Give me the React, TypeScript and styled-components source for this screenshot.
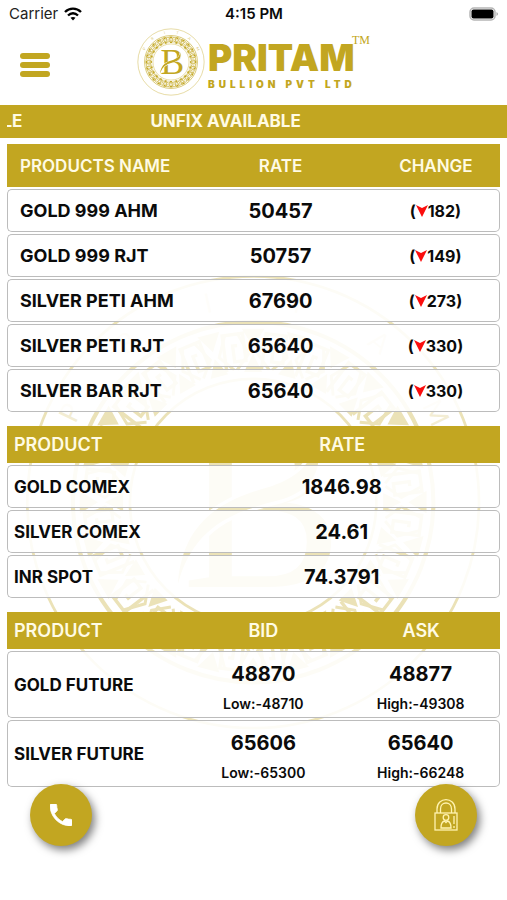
import React from "react";
import styled, { createGlobalStyle } from "styled-components";

const GOLD = "#c2a621";
const CREAM = "#fffbe4";

const GlobalStyle = createGlobalStyle`
  *, *::before, *::after { box-sizing: border-box; }
  body {
    margin: 0;
    background: #fff;
    color: #0b0b0b;
    font-family: Inter, "Liberation Sans", sans-serif;
  }
`;

const Screen = styled.div`
  display: flex;
  flex-direction: column;
  min-height: 100vh;
`;

const StatusBar = styled.div`
  display: grid;
  grid-template-columns: 1fr auto 1fr;
  align-items: center;
  height: 27px;
  padding: 0 8px 0 9px;
  font-size: 15px;
`;

const Carrier = styled.span`
  display: flex;
  align-items: center;
  gap: 6px;
  color: #222;
`;

const Clock = styled.span`
  font-size: 15px;
  font-weight: 600;
`;

const BatteryIcon = styled.svg`
  justify-self: end;
`;

const Header = styled.header`
  display: grid;
  grid-template-columns: 1fr auto 1fr;
  align-items: start;
  height: 78px;
  padding: 0 20px;
`;

const MenuButton = styled.button`
  display: flex;
  flex-direction: column;
  gap: 3px;
  width: 30px;
  margin-top: 26px;
  padding: 0;
  border: 0;
  background: none;
  cursor: pointer;
`;

const MenuBar = styled.span`
  height: 6px;
  border-radius: 3px;
  background: ${GOLD};
`;

const Content = styled.main`
  position: relative;
  isolation: isolate;
  flex: 1;
`;

const Watermark = styled.div`
  position: absolute;
  inset: 0;
  z-index: -1;
  display: grid;
  place-items: center;
  opacity: 0.32;

  svg {
    width: 90%;
    height: auto;
  }
`;

const Ticker = styled.div`
  height: 33px;
  padding: 0 7px;
  background: ${GOLD};
  color: ${CREAM};
  font-size: 17px;
  font-weight: 700;
  line-height: 33px;
`;

const TickerWindow = styled.div`
  overflow: hidden;
`;

const TickerTrack = styled.div<{ $offset: number }>`
  display: flex;
  gap: 128px;
  width: max-content;
  transform: translateX(${(p) => -p.$offset}px);
`;

const Board = styled.div`
  display: grid;
  gap: 10px;
  padding: 4px 7px 110px;
`;

const PriceTable = styled.table`
  width: 100%;
  table-layout: fixed;
  border-collapse: separate;
  border-spacing: 0 2px;
`;

const Column = styled.col<{ $width: number }>`
  width: ${(p) => p.$width}%;
`;

const HeadCell = styled.th<{ $tall?: boolean; $name?: boolean; $inset?: boolean }>`
  height: ${(p) => (p.$tall ? 43 : 37)}px;
  padding: 0 0 0 ${(p) => (p.$name ? (p.$inset ? 13 : 7) : 0)}px;
  background: ${GOLD};
  color: ${CREAM};
  font-size: ${(p) => (p.$tall ? 17 : 18)}px;
  font-weight: 600;
  text-align: ${(p) => (p.$name ? "left" : "center")};
`;

const Row = styled.tr<{ $tall?: boolean }>`
  & > * {
    height: ${(p) => (p.$tall ? 67 : 43)}px;
    border: 1px solid #bcbcbc;
    border-width: 1px 0;
    background: rgba(255, 255, 255, 0.88);
  }
  & > :first-child {
    border-left-width: 1px;
    border-radius: 5px 0 0 5px;
  }
  & > :last-child {
    border-right-width: 1px;
    border-radius: 0 5px 5px 0;
  }
`;

const NameCell = styled.th<{ $inset?: boolean }>`
  padding: 0 0 0 ${(p) => (p.$inset ? 12 : 6)}px;
  font-size: ${(p) => (p.$inset ? 18 : 17)}px;
  font-weight: 700;
  text-align: left;
  white-space: nowrap;
`;

const ValueCell = styled.td`
  padding: 0;
  font-size: 20px;
  font-weight: 700;
  text-align: center;
`;

const Change = styled.span`
  display: flex;
  align-items: center;
  justify-content: center;
  font-size: 16px;
`;

const Quote = styled.div`
  display: grid;
  gap: 10px;
  padding-top: 4px;
  line-height: 24px;
`;

const Extreme = styled.small`
  font-size: 14px;
  font-weight: 600;
  line-height: 16px;
`;

const FloatingButton = styled.button<{ $side: "left" | "right" }>`
  position: fixed;
  bottom: 54px;
  ${(p) => p.$side}: 30px;
  display: grid;
  place-items: center;
  width: 62px;
  height: 62px;
  padding: 0;
  border: 0;
  border-radius: 50%;
  background: ${GOLD};
  box-shadow: 3px 4px 9px rgba(0, 0, 0, 0.5);
  cursor: pointer;
`;

const SEGMENTS = Array.from({ length: 24 }, (_, i) => i * 15);

const Seal = ({ id }: { id: string }) => (
  <g fill="none" stroke={GOLD}>
    <circle r="99" strokeWidth="1.2" />
    <circle r="79" strokeWidth="1.8" />
    <circle r="54" strokeWidth="1.2" />
    {SEGMENTS.map((angle) => (
      <g key={angle} transform={`rotate(${angle})`}>
        <path d="M-5 -76 L5 -76 L0 -68 Z M-4 -57 L4 -57 L0 -65 Z" fill={GOLD} stroke="none" />
        <path d="M-7 -74 L-2 -65 L-7 -58 M7 -74 L2 -65 L7 -58" strokeWidth="1.3" />
        <path transform="rotate(7.5)" d="M-4 -58 V-74 H5 V-62 H0 V-69 H2" strokeWidth="1.5" />
      </g>
    ))}
    <path id={`${id}-arc`} d="M-80.4 -27.7 A85 85 0 0 1 80.4 -27.7" stroke="none" />
    {["P", "R", "I", "T", "A", "M"].map((letter, i) => (
      <text
        key={letter}
        fontFamily="Lato, sans-serif"
        fontSize="12"
        fill={GOLD}
        fillOpacity="0.6"
        stroke="none"
        textAnchor="middle"
      >
        <textPath href={`#${id}-arc`} startOffset={`${5 + i * 18}%`}>
          {letter}
        </textPath>
      </text>
    ))}
    <text
      x="4"
      y="37"
      fontFamily="'Liberation Serif', serif"
      fontSize="106"
      fill={GOLD}
      stroke="none"
      textAnchor="middle"
    >
      B
    </text>
    <path
      d="M-33 36 C-31 6 -10 -2 8 -7 C20 -11 27 -18 27 -28 C32 -14 25 -5 12 -1 C-8 4 -26 10 -33 36 Z"
      fill={GOLD}
      stroke="#fff"
      strokeWidth="3"
      paintOrder="stroke"
    />
  </g>
);

const Logo = () => (
  <svg width="234" height="70" viewBox="0 0 234 70" role="img" aria-label="Pritam Bullion Pvt Ltd">
    <g transform="translate(34 35) scale(0.335)">
      <Seal id="logo" />
    </g>
    <g fill={GOLD} fontFamily="Inter, sans-serif">
      <text x="71" y="44" fontSize="37" fontWeight="900">
        PRITAM
      </text>
      <text x="71" y="61" fontSize="10" fontWeight="900" letterSpacing="4">
        BULLION PVT LTD
      </text>
      <text x="215" y="17" fontSize="12" fontFamily="'Liberation Serif', serif">
        TM
      </text>
    </g>
  </svg>
);

const WifiIcon = () => (
  <svg width="18" height="14" viewBox="0 0 18 14" fill="none" stroke="#000" strokeWidth="2.3" aria-hidden="true">
    <path d="M1 5 C5.5 0.5 12.5 0.5 17 5" />
    <path d="M4 8.5 C7 5.5 11 5.5 14 8.5" />
    <path d="M6.5 10.8 C8 9.6 10 9.6 11.5 10.8 L9 13.5 Z" fill="#000" stroke="none" />
  </svg>
);

const DownArrow = () => (
  <svg width="12" height="12" viewBox="0 0 12 12" role="img" aria-label="down">
    <path d="M0 0 L6 3 L12 0 L6 12 Z" fill="#fb0d0d" />
  </svg>
);

const PhoneIcon = () => (
  <svg width="22" height="22" viewBox="3 3 18 18" fill="#fff" stroke="#fff" strokeWidth="0.6" aria-hidden="true">
    <path d="M6.62 10.79c1.44 2.83 3.76 5.14 6.59 6.59l2.2-2.2c.27-.27.67-.36 1.02-.24 1.12.37 2.33.57 3.57.57.55 0 1 .45 1 1V20c0 .55-.45 1-1 1-9.39 0-17-7.61-17-17 0-.55.45-1 1-1h3.5c.55 0 1 .45 1 1 0 1.25.2 2.45.57 3.57.11.35.03.74-.25 1.02l-2.2 2.2z" />
  </svg>
);

const LockIcon = () => (
  <svg width="26" height="34" viewBox="0 0 26 34" fill="none" stroke="#fff3b0" strokeWidth="1.3" aria-hidden="true">
    <path d="M4 15 V11 C4 -1.5 22 -1.5 22 11 V15 M7.5 15 V11 C7.5 3 18.5 3 18.5 11 V15" />
    <rect x="2" y="15" width="22" height="17" />
    <circle cx="13" cy="19.5" r="2.8" />
    <path d="M8 30 C8 26 9.5 23.5 11.5 23 L13 24.5 L14.5 23 C16.5 23.5 18 26 18 30 Z" />
    <path d="M21 18 V26 M21 28 V30" />
  </svg>
);

const PRODUCTS = [
  { name: "GOLD 999 AHM", rate: "50457", change: "182" },
  { name: "GOLD 999 RJT", rate: "50757", change: "149" },
  { name: "SILVER PETI AHM", rate: "67690", change: "273" },
  { name: "SILVER PETI RJT", rate: "65640", change: "330" },
  { name: "SILVER BAR RJT", rate: "65640", change: "330" },
];

const SPOT = [
  { name: "GOLD COMEX", rate: "1846.98" },
  { name: "SILVER COMEX", rate: "24.61" },
  { name: "INR SPOT", rate: "74.3791" },
];

const FUTURES = [
  { name: "GOLD FUTURE", bid: "48870", low: "48710", ask: "48877", high: "49308" },
  { name: "SILVER FUTURE", bid: "65606", low: "65300", ask: "65640", high: "66248" },
];

const Columns = ({ widths }: { widths: number[] }) => (
  <colgroup>
    {widths.map((width, i) => (
      <Column key={i} $width={width} />
    ))}
  </colgroup>
);

export default function App() {
  return (
    <Screen>
      <GlobalStyle />
      <StatusBar>
        <Carrier>
          Carrier
          <WifiIcon />
        </Carrier>
        <Clock>4:15 PM</Clock>
        <BatteryIcon width="30" height="14" viewBox="0 0 30 14" aria-hidden="true">
          <rect x="1" y="1" width="25" height="12" rx="4" fill="#fff" stroke="#b5b5b5" strokeWidth="1.5" />
          <rect x="2.5" y="2.5" width="22" height="9" rx="2" fill="#000" />
          <path d="M27.5 5 C29.5 6 29.5 8 27.5 9 Z" fill="#aaa" />
        </BatteryIcon>
      </StatusBar>
      <Header>
        <MenuButton type="button" aria-label="Menu">
          <MenuBar />
          <MenuBar />
          <MenuBar />
        </MenuButton>
        <Logo />
      </Header>
      <Content>
        <Watermark aria-hidden="true">
          <svg viewBox="-100 -100 200 200">
            <Seal id="watermark" />
          </svg>
        </Watermark>
        <Ticker>
          <TickerWindow>
            <TickerTrack $offset={135}>
              <span>UNFIX AVAILABLE</span>
              <span>UNFIX AVAILABLE</span>
            </TickerTrack>
          </TickerWindow>
        </Ticker>
        <Board>
          <PriceTable>
            <Columns widths={[37, 37, 26]} />
            <thead>
              <tr>
                <HeadCell $tall $name $inset scope="col">PRODUCTS NAME</HeadCell>
                <HeadCell $tall scope="col">RATE</HeadCell>
                <HeadCell $tall scope="col">CHANGE</HeadCell>
              </tr>
            </thead>
            <tbody>
              {PRODUCTS.map((item) => (
                <Row key={item.name}>
                  <NameCell $inset scope="row">{item.name}</NameCell>
                  <ValueCell>{item.rate}</ValueCell>
                  <ValueCell>
                    <Change>
                      (<DownArrow />
                      {item.change})
                    </Change>
                  </ValueCell>
                </Row>
              ))}
            </tbody>
          </PriceTable>
          <PriceTable>
            <Columns widths={[36, 64]} />
            <thead>
              <tr>
                <HeadCell $name scope="col">PRODUCT</HeadCell>
                <HeadCell scope="col">RATE</HeadCell>
              </tr>
            </thead>
            <tbody>
              {SPOT.map((item) => (
                <Row key={item.name}>
                  <NameCell scope="row">{item.name}</NameCell>
                  <ValueCell>{item.rate}</ValueCell>
                </Row>
              ))}
            </tbody>
          </PriceTable>
          <PriceTable>
            <Columns widths={[36, 32, 32]} />
            <thead>
              <tr>
                <HeadCell $name scope="col">PRODUCT</HeadCell>
                <HeadCell scope="col">BID</HeadCell>
                <HeadCell scope="col">ASK</HeadCell>
              </tr>
            </thead>
            <tbody>
              {FUTURES.map((item) => (
                <Row key={item.name} $tall>
                  <NameCell scope="row">{item.name}</NameCell>
                  <ValueCell>
                    <Quote>
                      {item.bid}
                      <Extreme>Low:-{item.low}</Extreme>
                    </Quote>
                  </ValueCell>
                  <ValueCell>
                    <Quote>
                      {item.ask}
                      <Extreme>High:-{item.high}</Extreme>
                    </Quote>
                  </ValueCell>
                </Row>
              ))}
            </tbody>
          </PriceTable>
        </Board>
      </Content>
      <FloatingButton type="button" $side="left" aria-label="Call">
        <PhoneIcon />
      </FloatingButton>
      <FloatingButton type="button" $side="right" aria-label="Account login">
        <LockIcon />
      </FloatingButton>
    </Screen>
  );
}
